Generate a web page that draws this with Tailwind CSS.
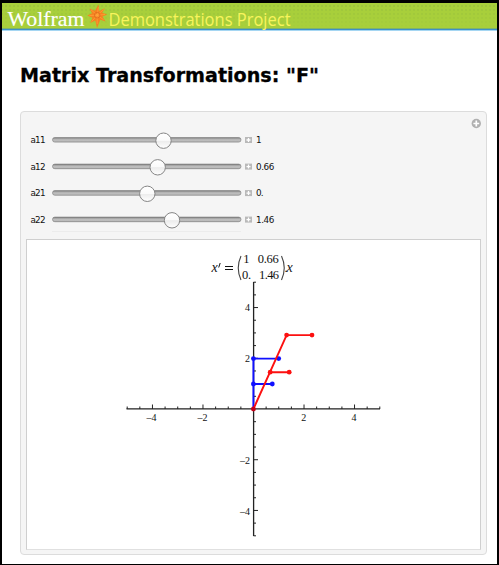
<!DOCTYPE html>
<html lang="en"><head><meta charset="utf-8"><title>Matrix Transformations</title>
<script src="https://cdn.jsdelivr.net/npm/@tailwindcss/browser@4"></script></head>
<body class="bg-white">
<div class="w-[499px] h-[565px] overflow-hidden border-black border-t-[3px] border-l-2 border-r-2 border-b bg-white flex flex-col">
  <header class="h-[28px] shrink-0 bg-[#a8cf3b]">
    <svg width="495" height="32" viewBox="2 3 495 32" class="block overflow-visible">
      <defs><pattern id="dots" width="4" height="4" patternUnits="userSpaceOnUse"><rect width="2" height="2" x="1" y="1" fill="#9dc43d"/></pattern>
      <linearGradient id="fade" x2="0" y2="1"><stop stop-color="#fff"/><stop offset="1" stop-color="#000"/></linearGradient><mask id="m"><rect x="2" y="3" width="495" height="25" fill="url(#fade)"/></mask></defs>
      <rect x="2" y="3" width="495" height="25" fill="url(#dots)" mask="url(#m)"/>
      <rect x="2" y="28" width="495" height="1" fill="#7fb36a"/><rect x="2" y="29" width="495" height="1" fill="#3f91c9"/><rect x="2" y="30" width="495" height="1" fill="#a5d6f2"/>
      <text x="7.500" y="25.800" font-family="Liberation Serif, serif" font-size="21.500" fill="#fff" stroke="#fff" stroke-width=".15" textLength="77" lengthAdjust="spacingAndGlyphs">Wolfram</text>
      <path fill="#f58220" d="M98.500 4.500L99.300 11L105 8.200L102.200 12.800L107.200 14.500L102.500 16.500L105.500 21.500L100.300 19.800L97 28L95.300 20.500L90.300 23L92.300 17.800L87.300 15.500L92 13.200L89.500 8.500L95 10.700Z"/>
      <path stroke="#ffad42" stroke-width=".6" fill="none" d="M97.200 15.200L98.400 7M97.200 15.200L103.500 9.700M97.200 15.200L105 14.500M97.200 15.200L103.700 19.800M97.200 15.200V24M97.200 15.200L91.700 21.500M97.200 15.200L89.500 15.500M97.200 15.200L91 9.800"/>
      <circle cx="97.200" cy="15.200" r="2.800" fill="none" stroke="#dc641c" stroke-width=".7"/>
      <text x="108.500" y="26" font-family="Open Sans, sans-serif" font-size="18.500" fill="#f8f45c" textLength="182" lengthAdjust="spacingAndGlyphs">Demonstrations Project</text>
    </svg>
  </header>
  <main class="pl-[18px] pr-[11px]">
    <h1 class="h-[80px]"><svg width="320" height="80" viewBox="20 31 320 80" class="block"><text x="20" y="81.500" font-family="DejaVu Sans, sans-serif" font-weight="bold" font-size="19.500" stroke="#000" stroke-width=".3" textLength="299" lengthAdjust="spacingAndGlyphs">Matrix Transformations: "F"</text></svg></h1>
    <section class="h-[444px] w-[467px] border-[1.500px] border-[#dcdcdc] rounded-[4px] bg-[#f5f5f5] px-[5px] pt-px">
      <svg width="455" height="126" viewBox="26 113 455 126" class="block overflow-visible">
        <defs>
          <linearGradient id="track" x2="0" y2="1"><stop stop-color="#777"/><stop offset=".3" stop-color="#a8a8a8"/><stop offset=".5" stop-color="#bdbdbd"/><stop offset=".85" stop-color="#bbb"/><stop offset="1" stop-color="#999"/></linearGradient>
          <linearGradient id="knob" x2="0" y2="1"><stop stop-color="#fff"/><stop offset=".48" stop-color="#fafafa"/><stop offset=".52" stop-color="#ececec"/><stop offset="1" stop-color="#fff"/></linearGradient>
          <g id="slider"><rect x="52.500" y="-2.500" width="188.500" height="4.600" rx="2.300" fill="url(#track)" stroke="#858585" stroke-width=".7"/><rect x="245" y="-3" width="7" height="6" fill="#b9b9b9"/><path d="M248.500-2v4M246.500 0h4" stroke="#fff" stroke-width="1.300"/></g>
          <g id="thumb"><circle r="7.700" cy=".7" fill="url(#knob)" stroke="#858585" stroke-width="1"/></g>
        </defs>
        <circle cx="476.300" cy="123.500" r="4.700" fill="#b0b0b0"/><path d="M476.300 120.600v5.800M473.400 123.500h5.800" stroke="#fff" stroke-width="1.700"/>
        <g font-family="DejaVu Sans, sans-serif" font-size="8.800" fill="#111">
          <g transform="translate(0 140)"><use href="#slider"/><use href="#thumb" x="163.500"/><text x="30.500" y="3.300" textLength="15">a11</text><text x="256" y="3.300">1</text></g>
          <g transform="translate(0 166.600)"><use href="#slider"/><use href="#thumb" x="157.700"/><text x="30.500" y="3.300" textLength="15">a12</text><text x="256" y="3.300" textLength="18.300">0.66</text></g>
          <g transform="translate(0 193.100)"><use href="#slider"/><use href="#thumb" x="147.300"/><text x="30.500" y="3.300" textLength="15">a21</text><text x="256" y="3.300" textLength="7.500">0.</text></g>
          <g transform="translate(0 219.600)"><use href="#slider"/><use href="#thumb" x="172"/><text x="30.500" y="3.300" textLength="15">a22</text><text x="256" y="3.300" textLength="18.300">1.46</text></g>
        </g>
        <path d="M52 231.500h189" stroke="#ececec"/>
      </svg>
      <div class="w-[455px] h-[311px] bg-white border border-[#cfcfcf] border-b-[#e0e0e0]">
        <svg id="plot" width="453" height="309" viewBox="27 240 453 309" class="block">
          <g font-family="Liberation Serif, serif" font-size="12.500" fill="#111">
            <text x="211.500" y="271.500" font-style="italic" font-size="14">x</text><path d="M220.200 263l-1.500 4.500M225 266.500h8M225 269.500h8" stroke="#111" stroke-width="1" fill="none"/>
            <path d="M241 256q-5.500 12 0 24M281.500 256q5.500 12 0 24" stroke="#444" stroke-width="1.100" fill="none"/>
            <text x="243.300" y="263">1</text><text x="257.800" y="263" textLength="21">0.66</text>
            <text x="242" y="279" textLength="9">0.</text><text x="259" y="279" textLength="20">1.46</text>
            <text x="284.500" y="271.500">.</text><text x="286.500" y="271.500" font-style="italic" font-size="14">x</text>
          </g>
          <path d="M126.500 408.900H380M253.600 282V536" stroke="#222" stroke-width="1.300"/>
          <g id="ticks" stroke="#222" stroke-width="1"></g>
          <g font-family="Liberation Serif, serif" font-size="10" fill="#111" text-anchor="middle">
            <text x="151.500" y="421">–4</text><text x="202.500" y="421">–2</text><text x="303.700" y="421">2</text><text x="354" y="421">4</text>
            <text x="247.500" y="311">4</text><text x="247.500" y="362">2</text><text x="245" y="464">–2</text><text x="245" y="515">–4</text>
          </g>
          <g stroke="#1010ff" fill="#1010ff"><path fill="none" stroke-width="1.900" d="M253.400 409V358.600H278.700M253.400 384H272.300"/><g stroke="none"><circle cx="253.400" cy="358.600" r="2.400"/><circle cx="278.700" cy="358.600" r="2.400"/><circle cx="253.400" cy="384" r="2.400"/><circle cx="272.300" cy="384" r="2.400"/></g></g>
          <g stroke="#fc1010" fill="#fc1010"><path fill="none" stroke-width="1.900" d="M253.400 409L286.600 335.100H312M270 372.200H289.200"/><g stroke="none"><circle cx="286.600" cy="335.100" r="2.400"/><circle cx="312" cy="335.100" r="2.400"/><circle cx="270.200" cy="372.200" r="2.400"/><circle cx="289.200" cy="372.200" r="2.400"/><circle cx="253.400" cy="409" r="2.400" fill="#c40018"/></g></g>
        </svg>
      </div>
    </section>
  </main>
</div>
<script>
const g=document.getElementById('ticks');
for(let i=-10;i<=10;i++){if(!i)continue;
 const long=i%4===0,p=document.createElementNS('http://www.w3.org/2000/svg','path');
 const x=253.5+i*12.63,y=409-i*12.68;
 p.setAttribute('d',`M${x} 409v${long?-4.5:-2.5}M253.5 ${y}h${long?4.5:2.5}`);g.appendChild(p);}
</script>
</body></html>
